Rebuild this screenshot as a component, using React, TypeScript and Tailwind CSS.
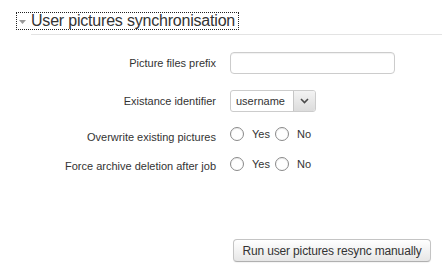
import React from "react";

function Radio({ label, first }: { label: string; first?: boolean }) {
  return (
    <>
      <span
        className={`${first ? "" : "ml-[5px]"} w-[14px] h-[14px] rounded-full border border-[#8a8a8a] bg-white shadow-[inset_0_1px_1px_rgba(0,0,0,0.08)]`}
      />
      <span className="ml-[8px]">{label}</span>
    </>
  );
}

export default function App() {
  return (
    <div className="w-[442px] h-[272px] bg-white overflow-hidden font-['Liberation_Sans',Arial,sans-serif] text-[#333]">
      {/* Legend */}
      <div className="flex pt-[12px] pl-[16px]">
        <div className="flex items-center h-[18px] border border-dotted border-[#222] pl-[2px] pr-[3px]">
          <svg width="7" height="4" viewBox="0 0 7 4" className="mt-[1px]">
            <polygon points="0,0 7,0 3.5,4" fill="#9a9a9a" />
          </svg>
          <span className="ml-[5px] text-[16px] leading-[16px] tracking-[-0.2px]">
            User pictures synchronisation
          </span>
        </div>
      </div>
      <div className="ml-[31px] mt-[4px] h-px bg-[#e3e3e3]" />

      {/* Rows */}
      <div className="flex flex-col text-[11px]">
        <div className="flex items-center mt-[17px]">
          <div className="w-[216px] text-right">Picture files prefix</div>
          <div className="ml-[14px] w-[165px] h-[22px] border border-[#cccccc] rounded-[4px] bg-white shadow-[inset_0_1px_1px_rgba(0,0,0,0.06)]" />
        </div>

        <div className="flex items-center mt-[16px]">
          <div className="w-[216px] text-right">Existance identifier</div>
          <div className="ml-[14px] w-[86px] h-[22px] border border-[#cccccc] rounded-[3px] bg-white flex items-stretch">
            <span className="flex-1 flex items-center pl-[5px] text-[#333]">username</span>
            <span className="w-[22px] border-l border-[#c6c6c6] bg-gradient-to-b from-[#f3f3f3] to-[#dcdcdc] flex items-center justify-center rounded-r-[2px]">
              <svg width="9" height="6" viewBox="0 0 9 6">
                <polyline points="1,1 4.5,4.5 8,1" fill="none" stroke="#4a4a4a" strokeWidth="1.6" />
              </svg>
            </span>
          </div>
        </div>

        <div className="flex items-center mt-[11px] h-[22px]">
          <div className="w-[216px] text-right pt-[6px]">Overwrite existing pictures</div>
          <div className="ml-[14px] flex items-center">
            <Radio label="Yes" first />
            <Radio label="No" />
          </div>
        </div>

        <div className="flex items-center mt-[8px] h-[22px]">
          <div className="w-[216px] text-right pt-[5px]">Force archive deletion after job</div>
          <div className="ml-[14px] flex items-center">
            <Radio label="Yes" first />
            <Radio label="No" />
          </div>
        </div>

        <div className="flex mt-[64px]">
          <div className="w-[216px]" />
          <button className="ml-[17px] w-[198px] h-[23px] border border-[#c4c4c4] border-b-[#b0b0b0] rounded-[4px] bg-gradient-to-b from-white to-[#e6e6e6] text-[12px] tracking-[-0.15px] text-[#333] shadow-[0_1px_1px_rgba(0,0,0,0.05)]">
            Run user pictures resync manually
          </button>
        </div>
      </div>
    </div>
  );
}
